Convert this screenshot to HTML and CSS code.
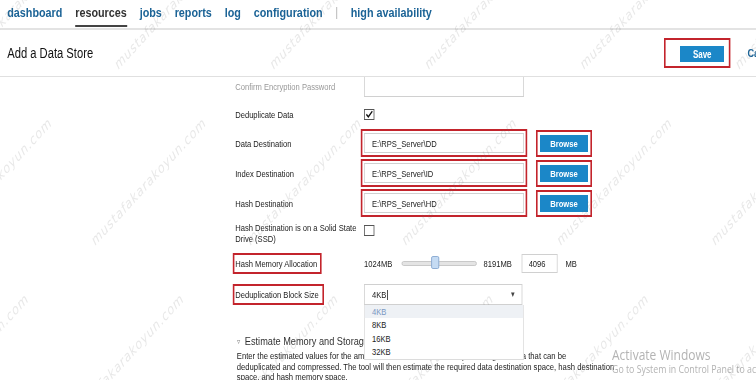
FILE: index.html
```html
<!DOCTYPE html>
<html lang="en">
<head>
    <meta charset="UTF-8">
    <meta name="viewport" content="width=device-width, initial-scale=1.0">
    <title>Add a Data Store</title>
    <link rel="stylesheet" href="styles.css">
</head>
<body>
<div class="screen">
    <nav class="topnav">
        <a class="nav-link">dashboard</a>
        <a class="nav-link active">resources</a>
        <a class="nav-link">jobs</a>
        <a class="nav-link">reports</a>
        <a class="nav-link">log</a>
        <a class="nav-link">configuration</a>
        <span class="nav-sep">|</span>
        <a class="nav-link">high availability</a>
    </nav>

    <header class="page-head">
        <h1>Add a Data Store</h1>
        <div class="actions">
            <span class="mark-box"><button class="btn btn-save">Save</button></span>
            <a class="cancel">Cancel</a>
        </div>
    </header>

    <main class="content">
        <div class="form">
            <div class="row row-first">
                <div class="label muted">Confirm Encryption Password</div>
                <input class="field field-tall" type="password">
            </div>
            <div class="row row-short">
                <div class="label">Deduplicate Data</div>
                <span class="check">
                    <svg width="11" height="9" viewBox="0 0 11 9"><path d="M2 4.4 L4.4 6.8 L9.4 1.2" fill="none" stroke="#111" stroke-width="1.5"/></svg>
                </span>
            </div>
            <div class="row">
                <div class="label">Data Destination</div>
                <input class="field mark-field" type="text" value="E:\RPS_Server\DD">
                <button class="btn btn-browse mark-btn">Browse</button>
            </div>
            <div class="row">
                <div class="label">Index Destination</div>
                <input class="field mark-field" type="text" value="E:\RPS_Server\ID">
                <button class="btn btn-browse mark-btn">Browse</button>
            </div>
            <div class="row">
                <div class="label">Hash Destination</div>
                <input class="field mark-field" type="text" value="E:\RPS_Server\HD">
                <button class="btn btn-browse mark-btn">Browse</button>
            </div>
            <div class="row row-top">
                <div class="label">Hash Destination is on a Solid State<br>Drive (SSD)</div>
                <span class="check check-top"></span>
            </div>
            <div class="row">
                <div class="label"><span class="mark">Hash Memory Allocation</span></div>
                <span class="unit">1024MB</span>
                <div class="slider"><span class="slider-thumb"></span></div>
                <span class="unit unit-max">8191MB</span>
                <input class="field field-small" type="text" value="4096">
                <span class="unit unit-mb">MB</span>
            </div>
            <div class="row row-select">
                <div class="label"><span class="mark">Deduplication Block Size</span></div>
                <div class="select">
                    <span class="select-value">4KB<span class="caret"></span></span>
                    <span class="select-arrow">&#9662;</span>
                    <ul class="dropdown">
                        <li class="selected">4KB</li>
                        <li>8KB</li>
                        <li>16KB</li>
                        <li>32KB</li>
                    </ul>
                </div>
            </div>
        </div>

        <section class="estimate">
            <h2><span class="tri">&#9663;</span>Estimate Memory and Storage Requirements</h2>
            <p>Enter the estimated values for the amount of source data, and the percentage of data that can be<br>deduplicated and compressed. The tool will then estimate the required data destination space, hash destination space, and hash memory space.</p>
        </section>
    </main>

    <div class="activation">
        <div class="activation-title">Activate Windows</div>
        <div class="activation-sub">Go to System in Control Panel to activate Windows.</div>
    </div>

    <div class="wm-layer">
        <span class="wm" style="left:-44px;top:56px">mustafakarakoyun.com</span>
        <span class="wm" style="left:150px;top:56px">mustafakarakoyun.com</span>
        <span class="wm" style="left:344px;top:56px">mustafakarakoyun.com</span>
        <span class="wm" style="left:538px;top:56px">mustafakarakoyun.com</span>
        <span class="wm" style="left:732px;top:56px">mustafakarakoyun.com</span>
        <span class="wm" style="left:926px;top:56px">mustafakarakoyun.com</span>
        <span class="wm" style="left:-72px;top:232px">mustafakarakoyun.com</span>
        <span class="wm" style="left:121px;top:232px">mustafakarakoyun.com</span>
        <span class="wm" style="left:315px;top:232px">mustafakarakoyun.com</span>
        <span class="wm" style="left:509px;top:232px">mustafakarakoyun.com</span>
        <span class="wm" style="left:703px;top:232px">mustafakarakoyun.com</span>
        <span class="wm" style="left:896px;top:232px">mustafakarakoyun.com</span>
        <span class="wm" style="left:-101px;top:408px">mustafakarakoyun.com</span>
        <span class="wm" style="left:93px;top:408px">mustafakarakoyun.com</span>
        <span class="wm" style="left:286px;top:408px">mustafakarakoyun.com</span>
        <span class="wm" style="left:480px;top:408px">mustafakarakoyun.com</span>
        <span class="wm" style="left:674px;top:408px">mustafakarakoyun.com</span>
        <span class="wm" style="left:868px;top:408px">mustafakarakoyun.com</span>
    </div>
</div>
</body>
</html>
```

FILE: styles.css
```css
body{
    margin: 0;
    width: 756px;
    height: 380px;
    overflow: hidden;
    background: #fff;
    color: #222;
    font-family: "Liberation Sans", Arial, sans-serif;
}

/* the captured screen is squeezed horizontally */
.screen{
    position: relative;
    width: 945px;
    height: 380px;
    overflow: hidden;
    transform: scaleX(0.8);
    transform-origin: 0 0;
}

/* top navigation */
.topnav{
    display: flex;
    align-items: flex-start;
    gap: 16px;
    height: 28px;
    padding-left: 9px;
    border-bottom: 2px solid #e3e3e3;
}
.nav-link{
    height: 27px;
    box-sizing: border-box;
    line-height: 25px;
    font-size: 13.5px;
    font-weight: bold;
    color: #1b6396;
    text-decoration: none;
}
.nav-link.active{
    color: #333;
    border-bottom: 2px solid #444;
}
.nav-sep{
    line-height: 25px;
    font-size: 12px;
    color: #aaa;
}

/* page header */
.page-head{
    display: flex;
    align-items: center;
    height: 46px;
    padding-left: 9px;
    border-bottom: 1px solid #e0e0e0;
}
.page-head h1{
    margin: 0;
    font-size: 14px;
    font-weight: normal;
    color: #111;
}
.actions{
    display: flex;
    align-items: center;
    margin-left: auto;
    margin-right: -27px;
}
.mark-box{
    display: inline-flex;
    padding: 6px 6px 4px 18px;
    border: 2px solid #c3242c;
    border-left-width: 2.5px;
    border-right-width: 2.5px;
}
.btn{
    border: 0;
    padding: 0;
    background: #1b87c8;
    color: #fff;
    font-family: inherit;
    font-weight: bold;
    cursor: pointer;
}
.btn-save{
    width: 55px;
    height: 16px;
    font-size: 10px;
}
.cancel{
    margin-left: 21px;
    font-size: 11.5px;
    font-weight: bold;
    color: #1b6396;
}

/* form */
.content{
    height: 303px;
    overflow: hidden;
}
.form{
    padding-left: 294px;
}
.row{
    display: flex;
    align-items: center;
    height: 30px;
}
.row-first{
    margin-top: -10px;
    margin-bottom: 3px;
    align-items: flex-end;
}
.row-first .label{
    padding-bottom: 5px;
}
.row-short{
    height: 28px;
}
.row-top{
    align-items: flex-start;
}
.row-top .label{
    padding-top: 4px;
}
.row-select{
    margin-top: 1px;
}
.label{
    width: 161px;
    flex-shrink: 0;
    font-size: 9.5px;
    line-height: 11px;
    color: #222;
}
.label.muted{
    color: #999;
}
.mark{
    display: inline-block;
    padding: 2px 3px 2px 0;
    outline: 2px solid #c3242c;
    outline-offset: 1px;
}
.field{
    box-sizing: border-box;
    width: 200px;
    height: 20px;
    margin: 0;
    padding: 0 0 0 9px;
    border: 1px solid #d0d0d0;
    background: #fff;
    font-family: inherit;
    font-size: 9.5px;
    color: #222;
}
.field-tall{
    height: 30px;
}
.mark-field{
    outline: 2px solid #c3242c;
    outline-offset: 2px;
}
.btn-browse{
    width: 60px;
    height: 17px;
    margin-left: 20px;
    font-size: 9.5px;
}
.mark-btn{
    outline: 2px solid #c3242c;
    outline-offset: 3px;
}
.check{
    display: inline-flex;
    width: 11px;
    height: 9px;
    border: 1px solid #555;
    background: #fff;
}
.check-top{
    margin-top: 7px;
}

/* memory slider */
.unit{
    font-size: 9.5px;
    color: #222;
}
.slider{
    position: relative;
    width: 92px;
    height: 3px;
    margin-left: 12px;
    border: 1px solid #c4c4c4;
    border-radius: 3px;
    background: #e4e4e4;
}
.slider-thumb{
    position: absolute;
    left: 36px;
    top: -6px;
    width: 8px;
    height: 11px;
    border: 1px solid #86a7d0;
    border-radius: 2px;
    background: #c5dbf3;
}
.unit-max{
    margin-left: 8px;
}
.field-small{
    width: 45px;
    height: 19px;
    margin-left: 12px;
    padding-left: 8px;
}
.unit-mb{
    margin-left: 10px;
}

/* block size select */
.select{
    position: relative;
    display: flex;
    align-items: center;
    box-sizing: border-box;
    width: 198px;
    height: 21px;
    padding: 0 8px 0 9px;
    border: 1px solid #d0d0d0;
    font-size: 9.5px;
}
.select-value{
    flex: 1;
}
.caret{
    display: inline-block;
    width: 1px;
    height: 10px;
    margin-left: 1px;
    vertical-align: -2px;
    background: #222;
}
.select-arrow{
    font-size: 9px;
    color: #444;
}
.dropdown{
    position: absolute;
    top: 20px;
    left: -1px;
    z-index: 2;
    width: 198px;
    margin: 0;
    padding: 0;
    list-style: none;
    background: #fff;
    border: 1px solid #dcdcdc;
    border-top: 0;
}
.dropdown li{
    height: 13.5px;
    line-height: 13.5px;
    padding-left: 9px;
    font-size: 9.5px;
    color: #222;
}
.dropdown li.selected{
    background: #eef1f5;
    color: #7a97c2;
}

/* estimate section */
.estimate{
    padding-left: 296px;
    margin-top: 25px;
}
.estimate h2{
    margin: 0;
    font-size: 11.5px;
    line-height: 14px;
    font-weight: normal;
    color: #333;
    white-space: nowrap;
}
.tri{
    margin-right: 6px;
    font-size: 8px;
    color: #888;
    vertical-align: 1px;
}
.estimate p{
    width: 482px;
    margin: 2px 0 0;
    font-size: 9.6px;
    line-height: 10.5px;
    color: #222;
}

/* windows activation notice */
.activation{
    position: absolute;
    left: 765px;
    top: 345px;
    color: #b3b3b3;
    font-family: "Open Sans", sans-serif;
    white-space: nowrap;
}
.activation-title{
    font-size: 15px;
    line-height: 18px;
}
.activation-sub{
    font-size: 11px;
    line-height: 12px;
}

/* watermark */
.wm-layer{
    position: absolute;
    top: 0;
    left: 0;
    width: 945px;
    height: 380px;
    overflow: hidden;
    pointer-events: none;
}
.wm{
    position: absolute;
    line-height: 16px;
    font-family: "DejaVu Sans", sans-serif;
    font-size: 14px;
    font-style: italic;
    letter-spacing: 1px;
    color: rgba(110, 110, 110, 0.16);
    white-space: nowrap;
    transform-origin: 0 100%;
    transform: rotate(-41deg);
}
```
